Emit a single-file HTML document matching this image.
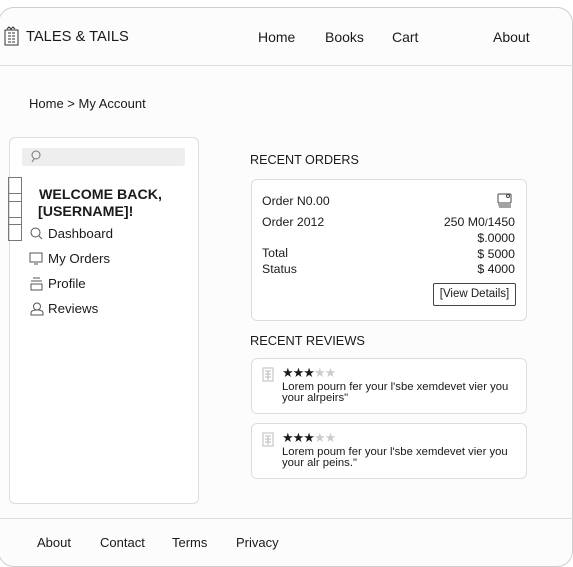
<!DOCTYPE html>
<html><head><meta charset="utf-8"><style>
*{margin:0;padding:0;box-sizing:border-box}
body{width:573px;height:563px;background:#fff;font-family:"Liberation Sans",Arial,sans-serif;color:#1a1a1a;position:relative;overflow:hidden}
.a{position:absolute;white-space:nowrap}
.frame{position:absolute;left:-2px;top:7px;width:575px;height:560px;border:1px solid #cfcfcf;border-radius:16px;background:#fcfcfc}
.hl{position:absolute;left:0;width:573px;height:1px;background:#ddd}
.nav{font-size:14px;top:29px}
.box{position:absolute;border:1px solid #ddd;border-radius:6px;background:#fff}
.mi{font-size:13.3px}
.r{font-size:12.3px}
.rv{font-size:11.3px;line-height:11px}
.star{font-size:13px;letter-spacing:-1px}
</style></head><body>
<div class="frame"></div>
<div class="hl" style="top:65px"></div>
<svg class="a" style="left:4px;top:26px" width="15" height="20" viewBox="0 0 15 20" fill="none" stroke="#333" stroke-width="1"><path d="M3 3l2-2 2 2 2-2 2 2"/><rect x="1" y="4" width="13" height="15"/><path d="M4 7h3M8 7h3M4 10h3M8 10h3M4 13h3M8 13h3M4 16h3M8 16h3"/></svg>
<div class="a" style="left:26px;top:29px;font-size:14.7px">TALES &amp; TAILS</div>
<div class="a nav" style="left:258px">Home</div>
<div class="a nav" style="left:325px">Books</div>
<div class="a nav" style="left:392px">Cart</div>
<div class="a nav" style="left:493px">About</div>
<div class="a" style="left:29px;top:96px;font-size:13px">Home &gt; My Account</div>

<div class="box" style="left:9px;top:137px;width:190px;height:367px"></div>
<div class="a" style="left:22px;top:148px;width:163px;height:18px;background:#eee;border-radius:2px"></div>
<svg class="a" style="left:30px;top:150px" width="12" height="13" viewBox="0 0 12 13" fill="none" stroke="#777" stroke-width="1"><circle cx="6" cy="5" r="4"/><path d="M2 12l2-3"/></svg>
<div class="a" style="left:8px;top:177px;width:14px;height:64px;border:1px solid #777;background:linear-gradient(#777,#777) 0 15px/100% 1px no-repeat,linear-gradient(#777,#777) 0 23px/100% 1px no-repeat,linear-gradient(#777,#777) 0 39px/100% 1px no-repeat,linear-gradient(#777,#777) 0 46px/100% 1px no-repeat"></div>
<div class="a" style="left:39px;top:187px;font-size:14.2px;font-weight:bold;line-height:17px">WELCOME BACK,<br><span style="margin-left:-1px">[USERNAME]!</span></div>
<svg class="a" style="left:30px;top:227px" width="13" height="13" viewBox="0 0 13 13" fill="none" stroke="#555" stroke-width="1"><circle cx="5.5" cy="5.5" r="4.5"/><path d="M9 9l3 3"/></svg>
<div class="a mi" style="left:48px;top:226px">Dashboard</div>
<svg class="a" style="left:29px;top:252px" width="14" height="13" viewBox="0 0 14 13" fill="none" stroke="#555" stroke-width="1"><rect x="1" y="1" width="12" height="9"/><path d="M5 12h4"/></svg>
<div class="a mi" style="left:48px;top:251px">My Orders</div>
<svg class="a" style="left:30px;top:277px" width="13" height="14" viewBox="0 0 13 14" fill="none" stroke="#555" stroke-width="1"><path d="M3 1h7M1 4h11"/><rect x="1" y="7" width="11" height="6"/></svg>
<div class="a mi" style="left:48px;top:276px">Profile</div>
<svg class="a" style="left:30px;top:302px" width="14" height="14" viewBox="0 0 14 14" fill="none" stroke="#555" stroke-width="1"><circle cx="7" cy="4.5" r="3.5"/><path d="M1 13v-2c0-2 2-3 6-3s6 1 6 3v2z"/></svg>
<div class="a mi" style="left:48px;top:301px">Reviews</div>

<div class="a" style="left:250px;top:153px;font-size:12.6px">RECENT ORDERS</div>
<div class="box" style="left:251px;top:179px;width:276px;height:142px"></div>
<div class="a r" style="left:262px;top:194px">Order N0.00</div>
<svg class="a" style="left:497px;top:192px" width="16" height="16" viewBox="0 0 16 16" fill="none" stroke="#444" stroke-width="1"><rect x="1" y="2" width="13" height="9" rx="1"/><path d="M1 13h13M2 15h12"/><circle cx="11" cy="4" r="1.5"/></svg>
<div class="a r" style="left:262px;top:215px">Order 2012</div>
<div class="a r" style="right:58px;top:215px">250 M0<span style="font-size:10px">/</span>1450</div>
<div class="a r" style="right:58px;top:231px">$.0000</div>
<div class="a r" style="left:262px;top:246px">Total</div>
<div class="a r" style="right:58px;top:247px">$ 5000</div>
<div class="a r" style="left:262px;top:262px">Status</div>
<div class="a r" style="right:58px;top:262px">$ 4000</div>
<div class="a" style="left:433px;top:283px;width:83px;height:23px;border:1px solid #444;border-radius:2px;font-size:11.5px;text-align:center;line-height:21px">[View Details]</div>

<div class="a" style="left:250px;top:333px;font-size:12.8px">RECENT REVIEWS</div>
<div class="box" style="left:251px;top:358px;width:276px;height:56px"></div>
<div class="box" style="left:251px;top:423px;width:276px;height:56px"></div>
<svg class="a" style="left:262px;top:367px" width="12" height="15" viewBox="0 0 12 15" fill="none" stroke="#bbb" stroke-width="1"><rect x="1" y="1" width="10" height="13"/><path d="M3 4h6M3 7h6M3 10h6M6 4v9"/></svg>
<div class="a star" style="left:282px;top:365px"><span>★★★</span><span style="color:#ccc">★★</span></div>
<div class="a rv" style="left:282px;top:382px">Lorem pourn fer your l'sbe xemdevet vier you<br>your alrpeirs"</div>
<svg class="a" style="left:262px;top:432px" width="12" height="15" viewBox="0 0 12 15" fill="none" stroke="#bbb" stroke-width="1"><rect x="1" y="1" width="10" height="13"/><path d="M3 4h6M3 7h6M3 10h6M6 4v9"/></svg>
<div class="a star" style="left:282px;top:430px"><span>★★★</span><span style="color:#ccc">★★</span></div>
<div class="a rv" style="left:282px;top:447px">Lorem poum fer your l'sbe xemdevet vier you<br>your alr peins."</div>

<div class="hl" style="top:518px"></div>
<div class="a" style="left:37px;top:535px;font-size:13px">About</div>
<div class="a" style="left:100px;top:535px;font-size:13px">Contact</div>
<div class="a" style="left:172px;top:535px;font-size:13px">Terms</div>
<div class="a" style="left:236px;top:535px;font-size:13px">Privacy</div>
</body></html>
